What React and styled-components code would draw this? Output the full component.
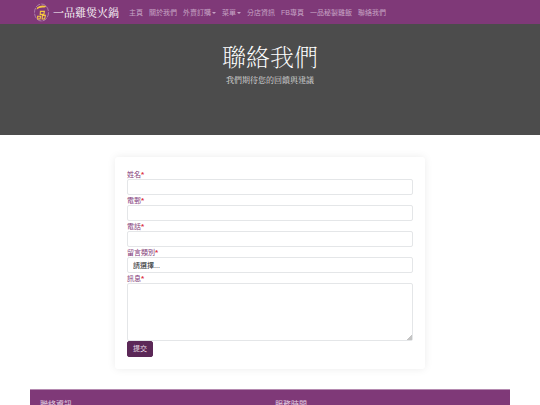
import React from "react";
import styled, { createGlobalStyle, css } from "styled-components";

const GlobalStyle = createGlobalStyle`
  *, *::before, *::after { box-sizing: border-box; }
  body {
    margin: 0;
    background: #fff;
    color: #212529;
    font-family: "Liberation Sans", "Noto Sans CJK TC", sans-serif;
    font-size: 7px;
    line-height: 10px;
  }
  button, input, select, textarea { font: inherit; }
  h1, h2, p { margin: 0; }
`;

const serif = css`
  font-family: "Noto Serif CJK TC", "Noto Sans CJK TC", serif;
`;

const Navbar = styled.header`
  display: flex;
  align-items: center;
  height: 24px;
  padding: 0 34px;
  background: #7f3978;
`;

const Brand = styled.a`
  ${serif}
  display: flex;
  align-items: center;
  gap: 4px;
  margin-right: 10px;
  color: #fff;
  font-size: 11px;
  line-height: 16px;
  font-weight: 400;
  text-decoration: none;
  white-space: nowrap;
`;

const Logo = styled.svg`
  width: 15px;
  height: 19px;
  flex: none;
`;

const Menu = styled.nav`
  display: flex;
  gap: 6px;
  padding-top: 2px;
  white-space: nowrap;
`;

const MenuLink = styled.a`
  display: flex;
  align-items: center;
  color: #c6a3c4;
  text-decoration: none;

  ${({ $dropdown }) =>
    $dropdown &&
    css`
      &::after {
        content: "";
        margin-left: 1px;
        border-top: 2px solid;
        border-left: 2px solid transparent;
        border-right: 2px solid transparent;
      }
    `}
`;

const Hero = styled.section`
  ${serif}
  min-height: 111px;
  padding-top: 16px;
  background: #4c4c4c;
  color: #fff;
  text-align: center;
`;

const HeroTitle = styled.h1`
  font-size: 24px;
  line-height: 31px;
  font-weight: 200;
`;

const HeroText = styled.p`
  font-size: 8px;
  line-height: 18px;
  color: #dcdcdc;
`;

const ContactForm = styled.form`
  display: flex;
  flex-direction: column;
  align-items: flex-start;
  max-width: 310px;
  margin: 22px auto 20px;
  padding: 12px;
  border-radius: 3px;
  background: #fff;
  box-shadow: 0 0 8px rgba(0, 0, 0, 0.08);
`;

const Field = styled.div`
  display: flex;
  flex-direction: column;
  width: 100%;
`;

const Label = styled.label`
  padding-top: 2px;
  line-height: 8px;
  color: #7f3978;
`;

const Required = styled.span`
  color: #dc3545;
  font-size: 8px;
  font-weight: 700;
`;

const control = css`
  width: 100%;
  height: 16px;
  margin: 0;
  padding: 0 5px;
  border: 1px solid #e4e6e8;
  border-radius: 2px;
  background: #fff;
  color: #212529;
`;

const TextInput = styled.input`
  ${control}
`;

const Select = styled.select`
  ${control}
  padding: 1px 5px 0;
  appearance: none;
`;

const TextArea = styled.textarea`
  ${control}
  height: 58px;
  padding: 3px 5px;
  resize: vertical;

  &::-webkit-resizer {
    background: linear-gradient(135deg, transparent 82%, #c4c4c4 82%);
  }
`;

const SubmitButton = styled.button`
  height: 16px;
  padding: 0 5px;
  border: 1px solid #5b2857;
  border-radius: 2px;
  background: #5b2857;
  color: #e9dfe8;
`;

const Footer = styled.footer`
  display: grid;
  grid-template-columns: 1fr 1fr;
  max-width: 480px;
  margin: 0 auto;
  padding: 9px 0 12px 10px;
  border-top: 1px solid #b58bb1;
  background: #7f3978;
  color: #fff;
`;

const FooterTitle = styled.h2`
  font-size: 8px;
  line-height: 12px;
  font-weight: 400;
  color: #e3d0e1;
`;

const links = [
  { text: "主頁" },
  { text: "關於我們" },
  { text: "外賣訂購", dropdown: true },
  { text: "菜單", dropdown: true },
  { text: "分店資訊" },
  { text: "FB專頁" },
  { text: "一品秘製雞飯" },
  { text: "聯絡我們" },
];

function FormField({ id, label, children }) {
  return (
    <Field>
      <Label htmlFor={id}>
        {label}
        <Required>*</Required>
      </Label>
      {children}
    </Field>
  );
}

function BrandMark() {
  return (
    <Logo viewBox="0 0 15 19" fill="none" aria-hidden="true">
      <ellipse cx="7.5" cy="9.5" rx="7" ry="8.5" stroke="#c09abf" strokeWidth="0.7" strokeDasharray="5 1" />
      <path d="M3 4.4Q7 1.4 12 3Q12 4.6 8.5 4.6Q5 4.8 2.6 6.6Z" fill="#f6c843" />
      <path d="M6.4 8.4H10.4L9.8 11.4H6.2ZM3.6 13.2H6.6L6 16H3.8ZM8.4 12.4H11.4L10.6 16H8.2Z" stroke="#f6c843" strokeWidth="1.1" />
    </Logo>
  );
}

export default function App() {
  return (
    <>
      <GlobalStyle />
      <Navbar>
        <Brand href="#">
          <BrandMark />
          一品雞煲火鍋
        </Brand>
        <Menu>
          {links.map(({ text, dropdown }) => (
            <MenuLink key={text} href="#" $dropdown={dropdown}>
              {text}
            </MenuLink>
          ))}
        </Menu>
      </Navbar>
      <main>
        <Hero>
          <HeroTitle>聯絡我們</HeroTitle>
          <HeroText>我們期待您的回饋與建議</HeroText>
        </Hero>
        <ContactForm>
          <FormField id="name" label="姓名">
            <TextInput id="name" type="text" />
          </FormField>
          <FormField id="email" label="電郵">
            <TextInput id="email" type="email" />
          </FormField>
          <FormField id="phone" label="電話">
            <TextInput id="phone" type="tel" />
          </FormField>
          <FormField id="category" label="留言類別">
            <Select id="category">
              <option>請選擇...</option>
            </Select>
          </FormField>
          <FormField id="message" label="訊息">
            <TextArea id="message" />
          </FormField>
          <SubmitButton type="button">提交</SubmitButton>
        </ContactForm>
      </main>
      <Footer>
        <FooterTitle>聯絡資訊</FooterTitle>
        <FooterTitle>服務時間</FooterTitle>
      </Footer>
    </>
  );
}
